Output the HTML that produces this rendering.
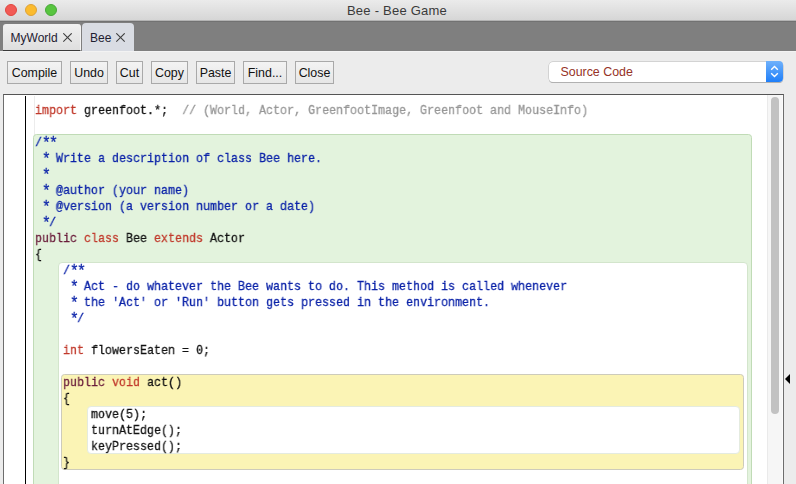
<!DOCTYPE html>
<html><head><meta charset="utf-8">
<style>
*{margin:0;padding:0;box-sizing:border-box}
html,body{width:796px;height:484px;overflow:hidden;background:#ececec;font-family:"Liberation Sans",sans-serif;position:relative}
.abs{position:absolute}
#title{left:0;top:0;width:796px;height:21px;background:linear-gradient(#ebebeb,#d6d6d6);border-bottom:1px solid #b4b4b4}
.dot{position:absolute;width:12px;height:12px;border-radius:50%;top:4px}
#ttl{position:absolute;left:-1px;width:796px;top:3px;text-align:center;font-size:13px;color:#3a3a3a;letter-spacing:0.23px}
#tabbar{left:0;top:21px;width:796px;height:30px;background:#7f7f7f;border-top:1px solid #727272}
.tab{position:absolute;font-size:12px;color:#1e2030}
.tab svg{position:absolute}
#tab1{left:3px;top:24px;width:78px;height:27px;background:linear-gradient(#f1f1f1,#dedede);border-radius:3px 3px 0 0;border-bottom:1px solid #3a3a3a;border-right:1px solid #f4f4f4}
#tab2{left:82px;top:23px;width:52px;height:28px;background:#d9dce3;border-radius:4px 4px 0 0}
.tab span{position:absolute;top:7px}
#tab1 svg{top:9px}
#tab2 svg{top:10px}
#tab2 span{top:8px}
#toolbar{left:0;top:51px;width:796px;height:43px;background:#ececec;border-top:1px solid #f3f3f3}
.btn{position:absolute;top:61px;height:23px;border:1px solid #a9a9a9;background:linear-gradient(#f3f3f3,#e6e6e6);font-size:12.4px;color:#111;text-align:center;line-height:22px}
#dd{left:549px;top:62px;width:234px;height:20px;background:#fff;border-radius:4px;box-shadow:0 0 0 0.5px #b9b9b9,0 1px 0 #a8a8a8}
#ddt{position:absolute;left:11.5px;top:3px;font-size:12.4px;color:#963226}
#ddb{position:absolute;right:0;top:-1px;width:17px;height:21px;background:linear-gradient(#6fb1fb,#1f7ff9);border-radius:0 4px 4px 0}
#editor{left:3px;top:94px;width:781px;height:400px;background:#fff;border:1px solid #6d6d6d;border-top:1px solid #555}
#gut{left:25px;top:96px;width:1px;height:388px;background:#000}
#gut2{left:34px;top:96px;width:1px;height:40px;background:#ececec}
#track{left:767px;top:95px;width:16px;height:389px;background:#f6f6f6;border-left:1px solid #eaeaea;border-right:1px solid #fbfbfb}
#thumb{left:771px;top:97px;width:8px;height:317px;background:#c2c2c2;border-radius:4px}
#tri{left:785px;top:374px;width:0;height:0;border-top:5px solid transparent;border-bottom:5px solid transparent;border-right:5px solid #000}
.box{position:absolute;border-radius:4px}
#green{left:33px;top:134px;width:719px;height:400px;background:#e3f3dd;border:1px solid #c0dbb6;border-radius:3.5px}
#white1{left:58px;top:262px;width:690px;height:300px;background:#fff;border:1px solid #d3e5cc;border-radius:4px 4px 0 0}
#yellow{left:61px;top:374px;width:683px;height:96px;background:#fbf4b5;border:1px solid #cdcbbb;border-radius:3.5px}
#white2{left:87px;top:406px;width:653px;height:48px;background:#fff;border:1px solid #e4ebe0}
.code{position:absolute;font-family:"Liberation Mono",monospace;font-size:13.5px;white-space:pre;color:#111;line-height:16px;transform:scaleX(0.8642);transform-origin:0 0;will-change:transform;-webkit-text-stroke:0.3px currentColor}
.kw{color:#c1392b}
.pb{color:#6a1c3a}
.cm{color:#979797}
.jd{color:#0a22a8}
.a{font-style:normal;display:inline-block;width:8.1px;text-align:center;font-size:17px;line-height:10px;position:relative;top:1.5px}
</style></head><body>
<div id="title" class="abs">
  <div class="dot" style="left:5px;background:#f25a55;border:0.5px solid #e1463f"></div>
  <div class="dot" style="left:25px;background:#fbbb2e;border:0.5px solid #dea236"></div>
  <div class="dot" style="left:45px;background:#58c53f;border:0.5px solid #48a83a"></div>
  <div id="ttl">Bee - Bee Game</div>
</div>
<div id="tabbar" class="abs"></div>
<div id="tab1" class="tab"><span style="left:7.6px">MyWorld</span><svg class="x" style="left:60px" width="10" height="10" viewBox="0 0 10 10"><path d="M0.3 0.3L8.7 8.7M8.7 0.3L0.3 8.7" stroke="#3f3f3f" stroke-width="1.1"/></svg></div>
<div id="tab2" class="tab"><span style="left:8px">Bee</span><svg class="x" style="left:34px" width="10" height="10" viewBox="0 0 10 10"><path d="M0.3 0.3L8.7 8.7M8.7 0.3L0.3 8.7" stroke="#3f3f3f" stroke-width="1.1"/></svg></div>
<div id="toolbar" class="abs"></div>
<div class="btn" style="left:7px;width:55px">Compile</div>
<div class="btn" style="left:70px;width:38px">Undo</div>
<div class="btn" style="left:116px;width:27px">Cut</div>
<div class="btn" style="left:151px;width:37px">Copy</div>
<div class="btn" style="left:196px;width:39px">Paste</div>
<div class="btn" style="left:243px;width:44px">Find...</div>
<div class="btn" style="left:295px;width:39px">Close</div>
<div id="dd" class="abs"><div id="ddt">Source Code</div><div id="ddb"><svg width="17" height="21" viewBox="0 0 17 21" style="position:absolute;left:0;top:0"><path d="M5.2 8.8L8.5 5.6L11.8 8.8M5.2 12.2L8.5 15.4L11.8 12.2" fill="none" stroke="#fff" stroke-width="1.4"/></svg></div></div>
<div id="editor" class="abs"></div>
<div id="gut" class="abs"></div>
<div id="gut2" class="abs"></div>
<div id="green" class="box"></div>
<div id="white1" class="box"></div>
<div id="yellow" class="box"></div>
<div id="white2" class="box"></div>
<div id="track" class="abs"></div>
<div id="thumb" class="abs"></div>
<div id="tri" class="abs"></div>

<div class="code" style="left:35px;top:103px"><span class="kw">import</span> greenfoot.*;  <span class="cm">// (World, Actor, GreenfootImage, Greenfoot and MouseInfo)</span></div>
<div class="code jd" style="left:35px;top:135px">/<i class="a">*</i><i class="a">*</i>
 <i class="a">*</i> Write a description of class Bee here.
 <i class="a">*</i> 
 <i class="a">*</i> @author (your name)
 <i class="a">*</i> @version (a version number or a date)
 <i class="a">*</i>/</div>
<div class="code" style="left:35px;top:231px"><span class="pb">public</span> <span class="kw">class</span> Bee <span class="kw">extends</span> Actor
{</div>
<div class="code jd" style="left:63px;top:263px">/<i class="a">*</i><i class="a">*</i>
 <i class="a">*</i> Act - do whatever the Bee wants to do. This method is called whenever
 <i class="a">*</i> the 'Act' or 'Run' button gets pressed in the environment.
 <i class="a">*</i>/</div>
<div class="code" style="left:63px;top:343px"><span class="kw">int</span> flowersEaten = 0;</div>
<div class="code" style="left:63px;top:375px"><span class="pb">public</span> <span class="kw">void</span> act()
{</div>
<div class="code" style="left:91px;top:407px">move(5);
turnAtEdge();
keyPressed();</div>
<div class="code" style="left:63px;top:455px">}</div>
</body></html>
